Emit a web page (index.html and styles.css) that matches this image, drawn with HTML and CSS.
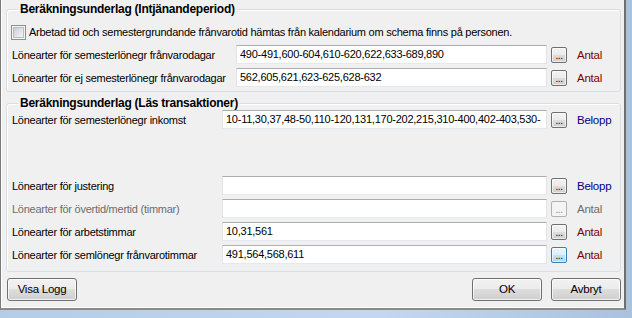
FILE: index.html
```html
<!DOCTYPE html>
<html>
<head>
<meta charset="utf-8">
<link rel="stylesheet" href="styles.css">
</head>
<body>
<div class="frame">
  <div class="dialog">
    <fieldset class="group g1">
      <legend>Beräkningsunderlag (Intjänandeperiod)</legend>
      <div class="check"><span class="box"><span class="inner"></span></span><span>Arbetad tid och semestergrundande frånvarotid hämtas från kalendarium om schema finns på personen.</span></div>
      <div class="row">
        <span class="lbl">Lönearter för semesterlönegr frånvarodagar</span>
        <div class="input">490-491,600-604,610-620,622,633-689,890</div>
        <span class="dots">...</span>
        <span class="unit antal">Antal</span>
      </div>
      <div class="row">
        <span class="lbl">Lönearter för ej semesterlönegr frånvarodagar</span>
        <div class="input">562,605,621,623-625,628-632</div>
        <span class="dots">...</span>
        <span class="unit antal">Antal</span>
      </div>
    </fieldset>
    <fieldset class="group g2">
      <legend>Beräkningsunderlag (Läs transaktioner)</legend>
      <div class="row first">
        <span class="lbl">Lönearter för semesterlönegr inkomst</span>
        <div class="input">10-11,30,37,48-50,110-120,131,170-202,215,310-400,402-403,530-</div>
        <span class="dots">...</span>
        <span class="unit belopp">Belopp</span>
      </div>
      <div class="row">
        <span class="lbl">Lönearter för justering</span>
        <div class="input"></div>
        <span class="dots">...</span>
        <span class="unit belopp">Belopp</span>
      </div>
      <div class="row disabled">
        <span class="lbl">Lönearter för övertid/mertid (timmar)</span>
        <div class="input"></div>
        <span class="dots">...</span>
        <span class="unit">Antal</span>
      </div>
      <div class="row">
        <span class="lbl">Lönearter för arbetstimmar</span>
        <div class="input">10,31,561</div>
        <span class="dots">...</span>
        <span class="unit antal">Antal</span>
      </div>
      <div class="row">
        <span class="lbl">Lönearter för semlönegr frånvarotimmar</span>
        <div class="input">491,564,568,611</div>
        <span class="dots hot">...</span>
        <span class="unit antal">Antal</span>
      </div>
    </fieldset>
    <div class="buttons">
      <span class="btn">Visa Logg</span>
      <span class="spacer"></span>
      <span class="btn">OK</span>
      <span class="btn">Avbryt</span>
    </div>
  </div>
</div>
</body>
</html>
```

FILE: styles.css
```css
html, body {
  margin: 0;
  padding: 0;
}
body {
  width: 632px;
  height: 318px;
  overflow: hidden;
  font-family: "Liberation Sans", Arial, sans-serif;
  font-size: 11px;
  letter-spacing: -0.25px;
  color: #000;
}
.frame {
  width: 632px;
  height: 318px;
  box-sizing: border-box;
  padding: 0 6px 8px 0;
  background: linear-gradient(90deg, #b4cce6 0%, #c3d8ee 60%, #a9c2dd 100%);
  display: flex;
}
.dialog {
  flex: 1;
  background: #f0f0f0;
  border-left: 1px solid #7a7a7a;
  border-right: 2px solid #6e6e6e;
  border-bottom: 2px solid #8a8a8a;
  box-shadow: inset 1px 0 0 #fdfdfd, inset 0 -1px 0 #fdfdfd;
  padding: 2px 3px 0 5px;
  display: flex;
  flex-direction: column;
}
.group {
  margin: 0;
  border: 1px solid #d5dfe5;
  border-radius: 3px;
  box-shadow: inset 1px 1px 0 #fff;
  padding: 0 0 0 5px;
  display: flex;
  flex-direction: column;
  gap: 4px;
}
.group legend {
  font-weight: bold;
  font-size: 12px;
  line-height: 14px;
  padding: 0 2px;
  margin-left: 6px;
}
.g1 {
  height: 90px;
  box-sizing: border-box;
}
.g2 {
  margin-top: 4px;
  height: 176px;
  box-sizing: border-box;
}
.check {
  display: flex;
  align-items: center;
  height: 18px;
  margin-top: 7px;
  margin-left: -1px;
  white-space: nowrap;
}
.box {
  width: 11px;
  height: 11px;
  border: 1px solid #8e8f8f;
  background: #f4f4f4;
  padding: 1px;
  box-sizing: content-box;
  margin-right: 3px;
  display: flex;
}
.box .inner {
  flex: 1;
  background: linear-gradient(135deg, #c8ccd2 0%, #e4e6e9 60%, #f4f4f4 100%);
  border: 1px solid #babdc2;
}
.row {
  display: flex;
  align-items: center;
  height: 19px;
  white-space: nowrap;
}
.g1 .row .lbl {
  width: 224px;
}
.g2 .row .lbl {
  width: 210px;
}
.g1 .row .input {
  width: 311px;
}
.g2 .row .input {
  width: 325px;
}
.row.first {
  margin-top: 0;
  margin-bottom: 43px;
}
.input {
  height: 19px;
  box-sizing: border-box;
  background: #fff;
  border: 1px solid #e2e3ea;
  border-top-color: #abadb3;
  border-bottom-color: #e3e9ef;
  padding: 2px 0 0 3px;
  white-space: nowrap;
  overflow: hidden;
  text-overflow: clip;
  line-height: 13px;
}
.dots {
  width: 16px;
  height: 16px;
  box-sizing: border-box;
  margin-left: 4px;
  margin-top: 1px;
  border: 1px solid #707070;
  border-radius: 2px;
  background: linear-gradient(#f2f2f2 0%, #ebebeb 50%, #dddddd 50%, #cfcfcf 100%);
  box-shadow: inset 0 0 0 1px rgba(255,255,255,0.6);
  font-size: 10px;
  line-height: 15px;
  text-align: center;
  letter-spacing: -0.5px;
}
.dots.hot {
  border-color: #3c7fb1;
  background: linear-gradient(#eaf6fd 0%, #d9f0fc 50%, #bee6fd 50%, #a7d9f5 100%);
}
.unit {
  margin-left: 10px;
  font-size: 11.5px;
}
.antal {
  color: #800000;
}
.belopp {
  color: #000080;
}
.disabled .lbl,
.disabled .unit {
  color: #6d6d6d;
}
.disabled .dots {
  border-color: #adb2b5;
  background: #f4f4f4;
  color: #838383;
  box-shadow: none;
}
.buttons {
  display: flex;
  gap: 9px;
  margin-top: 6px;
  padding-left: 1px;
}
.spacer {
  flex: 1;
}
.btn {
  width: 70px;
  height: 23px;
  box-sizing: border-box;
  border: 1px solid #707070;
  border-radius: 3px;
  background: linear-gradient(#f2f2f2 0%, #ebebeb 50%, #dddddd 50%, #cfcfcf 100%);
  box-shadow: inset 0 0 0 1px rgba(255,255,255,0.7);
  font-size: 11.5px;
  line-height: 21px;
  text-align: center;
}
```
